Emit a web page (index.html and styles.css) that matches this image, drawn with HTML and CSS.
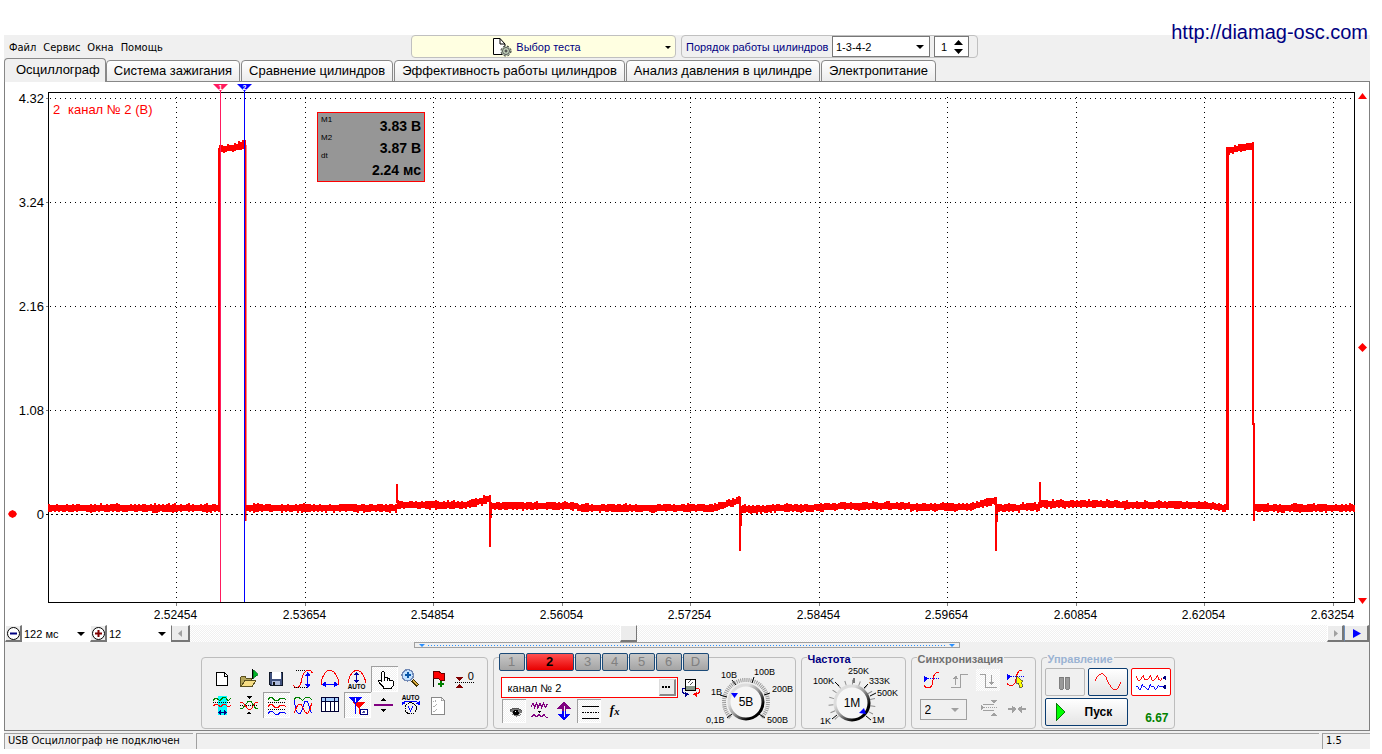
FILE: index.html
```html
<!DOCTYPE html>
<html lang="ru">
<head>
<meta charset="utf-8">
<title>Осциллограф</title>
<link rel="stylesheet" href="styles.css">
</head>
<body>
<div class="window">
  <header class="topbar">
    <nav class="menu">
      <a href="#">Файл</a><a href="#">Сервис</a><a href="#">Окна</a><a href="#">Помощь</a>
    </nav>
    <button class="test-picker" type="button">
      <svg width="20" height="20" viewBox="0 0 20 20"><path d="M1.500 1.500H8L13 7V17.500H1.500Z" fill="#fff" stroke="#000"/><path d="M8 1.500V7H13" fill="none" stroke="#000"/><circle cx="14" cy="14" r="5" fill="#c4d4bc" stroke="#222" stroke-dasharray="2 2"/><circle cx="14" cy="14" r="3.500" fill="#c4d4bc" stroke="#555"/><circle cx="14" cy="14" r="1" fill="#fff" stroke="#222"/></svg>
      <span>Выбор теста</span>
      <i class="caret"></i>
    </button>
    <div class="order-box">
      <label for="order">Порядок работы цилиндров</label>
      <span class="drop order"><select id="order"><option>1-3-4-2</option></select></span>
      <span class="spin"><input id="cyl" type="text" value="1" aria-label="Цилиндр"><svg width="9" height="14" viewBox="0 0 9 14"><path d="M0 5L4.500 0L9 5ZM0 9L4.500 14L9 9Z"/></svg></span>
    </div>
    <a class="site" href="#">http://diamag-osc.com</a>
  </header>

  <div class="tabs" role="tablist">
    <button class="tab active" role="tab" type="button">Осциллограф</button>
    <button class="tab" role="tab" type="button">Система зажигания</button>
    <button class="tab" role="tab" type="button">Сравнение цилиндров</button>
    <button class="tab" role="tab" type="button">Эффективность работы цилиндров</button>
    <button class="tab" role="tab" type="button">Анализ давления в цилиндре</button>
    <button class="tab" role="tab" type="button">Электропитание</button>
  </div>

  <main class="panel">
    <svg class="chart" viewBox="5 82 1364 543">
      <g id="grid"></g>
      <rect class="frame" x="48.500" y="92.500" width="1306" height="510"/>
      <path id="trace" class="trace"/>
      <path class="edges" d="M245.500 145V521M490 497V547M491 510V518M397 503V484M398 500V508M740 497V551M741 510V526M996 497V551M997 510V522M1040 504V482M1253 145V424H1254V521"/>
      <path class="edges rise" d="M219.500 510V148M1227.500 510V150"/>
      <path class="zero" d="M46 514.500H1354"/>
      <path d="M220.500 90V602" stroke="#ff1a5e"/><path d="M244.500 90V602" stroke="#00f"/>
      <path d="M213 84H228L220.500 91.500Z" fill="#ff1a5e"/><path d="M237 84H252L244.500 91.500Z" fill="#00f"/>
      <text class="mark" x="220.500" y="90">1</text><text class="mark" x="244.500" y="90">2</text>
      <text class="channel" x="53" y="114">2</text><text class="channel" x="68" y="114">канал № 2 (В)</text>
      <rect x="317.500" y="112.500" width="107" height="69" fill="#969696" stroke="#f00"/>
      <g class="tiny"><text x="321" y="122">M1</text><text x="321" y="140">M2</text><text x="321" y="158">dt</text></g>
      <g class="reading"><text x="421" y="131">3.83 В</text><text x="421" y="153">3.87 В</text><text x="421" y="175">2.24 мс</text></g>
      <g fill="#f00"><path d="M1358 99H1367L1362.500 93Z"/><path d="M1358 598H1367L1362.500 604Z"/><path d="M1358 347.500L1362.500 343L1367 347.500L1362.500 352Z"/><path d="M8 514L9.500 511.500L12.500 510L15.500 511.500L17 514L15.500 516.500L12.500 518L9.500 516.500Z"/></g>
    </svg>

    <div class="scrollrow">
      <button class="raised" type="button" aria-label="Уменьшить"><svg width="15" height="15" viewBox="0 0 15 15"><circle cx="7.500" cy="7.500" r="6" fill="#fff" stroke="#000"/><path d="M4 7.500H11" stroke="#000080" stroke-width="2"/></svg></button>
      <span class="drop flat span-time"><select aria-label="Развёртка"><option>122 мс</option></select></span>
      <button class="raised" type="button" aria-label="Увеличить"><svg width="15" height="15" viewBox="0 0 15 15"><circle cx="7.500" cy="7.500" r="6" fill="#fff" stroke="#000"/><path d="M4 7.500H11M7.500 4V11" stroke="#800000" stroke-width="2"/></svg></button>
      <span class="drop flat span-div"><select aria-label="Деление"><option>12</option></select></span>
      <button class="raised edge" type="button" aria-label="Влево"><svg width="9" height="9" viewBox="0 0 9 9"><path d="M2 4.500L6 1V8Z" fill="#a0a0a0"/></svg></button>
      <input class="scroll" type="range" min="0" max="1000" value="384" aria-label="Прокрутка">
      <button class="raised" type="button" aria-label="Вправо"><svg width="9" height="9" viewBox="0 0 9 9"><path d="M3 1V8L7 4.500Z" fill="#a0a0a0"/></svg></button>
      <button class="raised go" type="button" aria-label="В конец"><svg width="9" height="9" viewBox="0 0 9 9"><path d="M1 0V9L9 4.500Z" fill="#00f"/></svg></button>
    </div>

    <div class="splitter"><svg width="8" height="5" viewBox="0 0 8 5"><path d="M1 1H7L4 4Z"/></svg><i></i><svg width="8" height="5" viewBox="0 0 8 5"><path d="M1 1H7L4 4Z"/></svg></div>

    <div class="controls">
      <fieldset class="group tools">
        <button type="button" aria-label="Новый"><svg viewBox="42 48 81 78"><path d="M64.500 67.500H88L97.500 77V106.500H64.500Z" fill="#fff" stroke="#000"/><path d="M88 67V78H98" stroke="#000"/></svg></button>
        <button type="button" aria-label="Открыть"><svg viewBox="123 48 81 78"><path d="M136.500 109V83L140 80H150L154 85H168V109Z" fill="#b5a65a" stroke="#5a5020"/><path d="M139 109L150 91H183L172 109Z" fill="#f6dd84" stroke="#5a5020"/><path d="M173 58V88" stroke="#000"/><path d="M174 59L190 73L174 86Z" fill="#00b428" stroke="#006018" stroke-width="2"/></svg></button>
        <button type="button" aria-label="Сохранить"><svg viewBox="204 48 81 78"><path d="M223.500 67.500H263.500V106.500H228L223.500 102Z" fill="#41527e" stroke="#101828"/><path d="M231 67H257V86H231Z" fill="#fff"/><path d="M232 94H255V106H232Z" fill="#aebbdc"/><path d="M235 96H241V106H235Z" fill="#111"/></svg></button>
        <button type="button" aria-label="Амплитуда"><svg viewBox="285 48 81 78"><path d="M303 61.500H336" class="dot"/><path d="M295 105L300 111H311L317 102L322 80L327 68L335 61.500H346L353 70" stroke="#f00"/><path d="M297 112.500H336" class="dot"/><path d="M338 73V107" stroke="#00f"/><path d="M329 78L338 66L347 78ZM329 102L338 114L347 102Z" fill="#00f"/></svg></button>
        <button type="button" aria-label="Период"><svg viewBox="366 48 81 78"><path d="M378.500 104V92L385 77L393 65L400 61.500H409L418 67L426 80L431 92V104" stroke="#f00"/><path d="M386 103.500H424" stroke="#00f"/><path d="M381 103L393 94V113ZM429 103L417 94V113Z" fill="#00f"/></svg></button>
        <button type="button" aria-label="Автоматически"><svg viewBox="12 48 81 78"><path d="M25.500 100V90L31 76L40 65L46 61.500H55L64 67L72 81L76.500 92V100" stroke="#f00"/><path d="M50 69V93" stroke="#0000a0"/><path d="M42 75L50 65L58 75ZM42 90L50 99L58 90Z" fill="#0000a0"/><text x="23" y="116" font-size="19">AUTO</text></svg></button>
        <button class="on" type="button" aria-label="Рука"><svg viewBox="93 48 81 78"><path d="M125.500 92V67L128 64.500H131L133.500 68V84M133.500 92V82H141.500V92M142 86H149.500V94M150 90H155L160.500 94V106L154.500 113V116.500H132L130 111L116.500 96V90H121L125.500 95" fill="#fff" stroke="#000"/></svg></button>
        <button type="button" aria-label="Лупа"><svg viewBox="174 48 81 78"><path d="M217 90L234 107" stroke="#403000" stroke-width="10"/><path d="M219 92L233 106" stroke="#e0b040" stroke-width="5"/><circle cx="203" cy="76" r="17" fill="#c3e2ff" stroke="#7189b5" stroke-width="4"/><path d="M194 76H212M203 67V85" stroke="#0a56a8" stroke-width="6"/></svg></button>
        <button type="button" aria-label="Метка"><svg viewBox="255 48 81 78"><path d="M279.500 63V111" stroke="#000"/><path d="M281 65H297L303 69H312V90H301L295 86H281Z" fill="#f00" stroke="#600"/><path d="M294 103H312M303 94V112" stroke="#008000" stroke-width="6"/></svg></button>
        <button type="button" aria-label="Обнулить"><svg viewBox="336 48 81 78"><path d="M345 97.500H402" class="dot"/><path d="M347 80H370L358.500 93ZM347 115H370L358.500 102Z" fill="#800000"/><text class="plain" x="383" y="90" font-size="33">0</text></svg></button>

        <button type="button" aria-label="Интервал"><svg viewBox="42 126 81 78"><path d="M69 138H96V195H69Z" fill="#0ff"/><path d="M54 151L60 146H66L75 152L84 143H92L99 152L107 146" stroke="#008000"/><path d="M54 157.500H108" class="dot"/><path d="M54 168L60 164H68L77 171L85 163H92L99 171L108 166" stroke="#f00"/><path d="M71 187.500H94" stroke="#000080"/><path d="M69 187L77 181V194ZM96 187L88 181V194Z" fill="#000080"/></svg></button>
        <button type="button" aria-label="Сжатие"><svg viewBox="123 126 81 78"><path d="M155 139H171L163 147ZM155 193H171L163 184Z" fill="#000"/><path d="M135 166.500H190" class="dot"/><path d="M135 175H143L160 153H167L182 175H190" stroke="#008000"/><path d="M135 157H143L160 179H167L182 157H190" stroke="#f00"/></svg></button>
        <button class="on" type="button" aria-label="Раздельно"><svg viewBox="204 126 81 78"><path d="M219 148L225 143H232L241 152H249L257 144H265L273 150" stroke="#008000"/><path d="M219 156.500H274M219 177.500H274" class="dot"/><path d="M219 169L225 164H232L241 173H249L257 165H265L273 171" stroke="#f00"/><path d="M219 190L225 185H232L241 193H249L257 186H265L273 191" stroke="#00f"/></svg></button>
        <button type="button" aria-label="Совместно"><svg viewBox="285 126 81 78"><path d="M297 149L303 143H312L323 151L334 141H342L351 149" stroke="#008000"/><path d="M298 151L302 178L309 190H317L324 171L330 154H337L342 168L349 189" stroke="#00f"/><path d="M298 188L304 173L311 162H318L324 173L331 188L338 190L345 179L350 159" stroke="#f00"/></svg></button>
        <button type="button" aria-label="Таблица"><svg viewBox="366 126 81 78"><path d="M379.500 142.500H430.500V184.500H379.500Z" fill="#fff" stroke="#003"/><path d="M380 143H430V153H380Z" fill="#a8d0ff"/><path d="M379 154.500H431M392.500 142V185M405.500 154V185M418.500 142V185" stroke="#003"/></svg></button>
        <button class="on" type="button" aria-label="Маркеры"><svg viewBox="12 126 81 78"><path d="M38 156H76L57 176Z" fill="#f00"/><path d="M57 170V192" stroke="#f00"/><path d="M27 142H67L47 163Z" fill="#00f"/><path d="M47 160V192" stroke="#00f"/><path d="M47 145V157" stroke="#fff"/><path d="M61.500 177.500H82.500V193.500H61.500Z" fill="#fff" stroke="#000080"/><path d="M66 189L71 182V189L77 182" stroke="#000080" stroke-width="2"/></svg></button>
        <button type="button" aria-label="Уровень"><svg viewBox="93 126 81 78"><path d="M102 165H159" stroke="#800080" stroke-width="5"/><path d="M123 152H139L131 144ZM123 177H139L131 187Z" fill="#000"/></svg></button>
        <button type="button" aria-label="Автодиапазон"><svg viewBox="174 126 81 78"><text x="185" y="151" font-size="19">AUTO</text><path d="M188 160L195 155H229L236 160" stroke="#00f"/><path d="M185 154V166L196 161ZM239 154V166L228 161Z" fill="#00f"/><circle cx="212" cy="175" r="17" fill="#f0f0f0" stroke="#000" stroke-dasharray="5 2"/><path d="M205 169L211 183L218 169" stroke="#00f"/></svg></button>
        <button type="button" aria-label="Список"><svg viewBox="255 126 81 78"><path d="M274.500 142.500H304L314.500 152V192.500H274.500Z" fill="#fff" stroke="#888"/><path d="M304 142V152H314M279 154L283 157L290 149M279 168L283 171L290 163M279 182L283 185L290 177" stroke="#888" stroke-width="2"/></svg></button>
      </fieldset>

      <fieldset class="group channels">
        <div class="chan-row">
          <button class="chan" type="button">1</button><button class="chan current" type="button">2</button><button class="chan" type="button">3</button><button class="chan" type="button">4</button><button class="chan" type="button">5</button><button class="chan" type="button">6</button><button class="chan" type="button">D</button>
        </div>
        <div class="chan-body">
          <div class="chan-left">
            <div class="name-row">
              <span class="name-box"><input type="text" value="канал № 2" aria-label="Имя канала"><button class="more" type="button" aria-label="Ещё"><svg width="9" height="2" viewBox="0 0 9 2"><path d="M0 0H2V2H0ZM3 0H5V2H3ZM6 0H8V2H6Z"/></svg></button></span>
              <button class="probe" type="button" aria-label="Датчик"><svg viewBox="573 102 60 60"><path d="M586.500 106.500H616.500V140H586.500Z" fill="#fff" stroke="#000"/><path d="M588 127H616V139H588Z" fill="#8a9a8a"/><path d="M594 116L598 112M601 110H604M601 122L610 113" stroke="#000" stroke-width="2"/><path d="M584 133H578V145L586 151" stroke="#00008b"/><path d="M586 143L597 151L586 159Z" fill="#00008b"/><path d="M618 133H626L629 140V145L619 151" stroke="#f00"/><path d="M620 143L609 151L620 159Z" fill="#f00"/></svg></button>
            </div>
            <div class="chan-tools">
              <button class="on" type="button" aria-label="Показать"><svg viewBox="36 165 72 72"><path d="M60 203L67 196H88L96 203L91 214L78 218L66 212Z" fill="#777"/><path d="M59 200L69 193H84L97 201" stroke="#555"/><circle cx="78" cy="206" r="8" fill="#000"/><path d="M62 205L68 210M87 212L94 206" stroke="#eee"/><path d="M75 203H79" stroke="#fff"/></svg></button>
              <button type="button" aria-label="Фильтр"><svg viewBox="111 165 72 72"><path d="M123 188L129 178L134 191L140 177L144 192L150 179L155 190L161 178L166 190L173 179" stroke="#800080" stroke-width="4"/><path d="M140 200H155L148 208Z" fill="#000"/><path d="M124 220L132 212L139 219L147 212L154 219L162 212L168 219L173 221" stroke="#800080"/></svg></button>
              <button type="button" aria-label="Инверсия"><svg viewBox="186 165 72 72"><path d="M222 174L242 194H229V202H215V194H202Z" fill="#800080"/><path d="M222 229L242 210H229V201H215V210H202Z" fill="#00f"/><path d="M222 185V218" stroke="#f0f0f0"/></svg></button>
              <button class="on" type="button" aria-label="Линии"><svg viewBox="261 165 72 72"><path d="M276 186.500H327M276 222.500H327" stroke="#000"/><path d="M276 204.500H327" stroke="#000" stroke-dasharray="5 3"/></svg></button>
              <button type="button" aria-label="Функция"><svg viewBox="336 165 72 72"><text class="fx" x="359" y="211" font-size="38">f</text><text class="fx" x="373" y="213" font-size="32">x</text></svg></button>
            </div>
          </div>
          <svg class="knob" width="91" height="55" viewBox="705 672 91 55">
            <defs><linearGradient id="rim" x1="0.150" y1="0.150" x2="0.850" y2="0.850"><stop offset="0.200" stop-color="#ddd"/><stop offset="0.500" stop-color="#999"/><stop offset="0.900" stop-color="#000"/></linearGradient></defs>
            <path d="M731.500 718.500A22 22 0 1 1 762.500 718.500" fill="none" stroke="#999" stroke-width="4" stroke-dasharray="1 1"/>
            <g stroke="#000"><path d="M733 715L728 719M728 698L721 696M737 686L733 681M753 684L755 678M765 696L771 694M760 715L766 719"/></g>
            <circle cx="747" cy="703" r="17" fill="#f6f6f6" stroke="url(#rim)" stroke-width="3"/>
            <path d="M732 694H739L735.500 699Z" fill="#00f"/>
            <g class="scale"><text x="707" y="724">0,1В</text><text x="712" y="696">1В</text><text x="722" y="679">10В</text><text x="755" y="676">100В</text><text x="773" y="693">200В</text><text x="768" y="724">500В</text></g>
            <text class="value" x="747" y="707">5В</text>
          </svg>
        </div>
      </fieldset>

      <fieldset class="group freq"><legend>Частота</legend>
        <svg class="knob" width="101" height="62" viewBox="803 665 101 62">
          <path d="M837 718A21 21 0 1 1 867 718" fill="none" stroke="#8f8f8f" stroke-width="5" stroke-dasharray="1 6"/>
          <g stroke="#000"><path d="M837 715L832 719M839 686L835 682M854 683V678M864 688L868 684M870 696L876 693M866 716L871 720"/></g>
          <circle cx="852" cy="703" r="17" fill="#f6f6f6" stroke="url(#rim)" stroke-width="3"/>
          <path d="M859 713L864 708L866 714Z" fill="#00f"/>
          <g class="scale"><text x="820" y="724">1K</text><text x="813" y="684">100K</text><text x="848" y="674">250K</text><text x="869" y="684">333K</text><text x="877" y="696">500K</text><text x="872" y="723">1M</text></g>
          <text class="value" x="852" y="707">1M</text>
        </svg>
      </fieldset>

      <fieldset class="group sync"><legend>Синхронизация</legend>
        <div class="sync-row">
          <button type="button" aria-label="Синхронизация"><svg viewBox="45 75 72 66"><path d="M57 94V114L69 104Z" fill="#00f"/><path d="M69 103.500H105" stroke="#00f" stroke-dasharray="3 3"/><path d="M57 125L64 131H75L81 124L84 108L87 94L94 86H103" stroke="#f00"/></svg></button>
          <button type="button" aria-label="Фронт"><svg viewBox="132 75 72 66"><path d="M141 129.500H168.500V92.500H192M155 123V98" stroke="#a0a0a0"/><path d="M147 105L155 94L163 105Z" fill="#a0a0a0"/></svg></button>
          <button class="dither" type="button" aria-label="Спад"><svg viewBox="216 75 72 66"><path d="M228 92.500H245.500V130.500H279M262 93V116" stroke="#a0a0a0"/><path d="M254 114H270L262 124Z" fill="#a0a0a0"/></svg></button>
          <button type="button" aria-label="Указать уровень"><svg viewBox="300 75 72 66"><path d="M309 88V108L321 98Z" fill="#00f"/><path d="M321 97.500H360" stroke="#00f" stroke-dasharray="3 3"/><path d="M309 119L316 124H327L334 116L337 99L340 88L347 79H354" stroke="#f00"/><path d="M338 97V121L344 118L347 132L356 128L353 115L358 113L345 102Z" fill="#ff0" stroke="#333" stroke-width="2"/></svg></button>
        </div>
        <div class="sync-row low">
          <span class="drop src"><select aria-label="Источник" disabled><option>2</option></select></span>
          <svg class="ico" width="24" height="22" viewBox="219 162 72 66"><path d="M228 178V196L238 187ZM257 166H278L268 176ZM257 213H278L268 203Z" fill="#a0a0a0"/><path d="M234 178.500H268M234 196.500H268" stroke="#a0a0a0"/><path d="M238 187.500H278" stroke="#a0a0a0" stroke-dasharray="3 3"/></svg>
          <svg class="ico" width="24" height="22" viewBox="300 162 72 66"><path d="M321 181L335 193L321 206ZM351 181L337 193L351 206Z" fill="#a0a0a0"/><path d="M309 193H325M347 193H363" stroke="#a0a0a0" stroke-width="6"/></svg>
        </div>
      </fieldset>

      <fieldset class="group run"><legend>Управление</legend>
        <button class="btn" type="button" aria-label="Пауза" disabled><svg viewBox="420 69 120 84"><path d="M463 95H474V135H463ZM483 95H494V135H483Z" fill="#999" stroke="#777"/></svg></button>
        <button class="btn blue" type="button" aria-label="Одиночный"><svg viewBox="549 69 120 84"><path d="M567 108L573 95L580 87L588 84L596 88L603 97L610 112L618 126L625 134L632 137L640 132L646 123L651 112" stroke="#f00"/></svg></button>
        <button class="btn red" type="button" aria-label="Непрерывный"><svg viewBox="678 69 120 84"><path d="M691 90L695 104L702 106L708 98L713 89L717 103L724 106L731 98L736 88L740 104L747 106L754 98L759 89L763 103L769 106L774 97" stroke="#f00"/><path d="M688 127L695 124L700 134L705 134L709 119L714 127L720 126L725 135L731 134L735 119L740 127L746 125L751 135L757 133L762 121L768 127H776" stroke="#00f"/><path d="M774 98L786 90V105ZM774 127L786 119V135Z" fill="#000080"/></svg></button>
        <button class="btn blue start" type="button"><svg width="12" height="20" viewBox="0 0 12 20"><path d="M1 1L10 10L1 19Z" fill="#0f0" stroke="#087808"/></svg><span>Пуск</span></button>
        <output class="rate">6.67</output>
      </fieldset>
    </div>
  </main>

  <footer class="status"><span>USB Осциллограф не подключен</span><span></span><span>1.5</span></footer>
</div>
<script src="script.js"></script>
</body>
</html>
```

FILE: styles.css
```css
* { box-sizing: border-box; }
body { margin: 0; background: #fff; font: 11px/14px "Liberation Sans", Arial, sans-serif; color: #000; }
button, input, select { font: inherit; color: inherit; margin: 0; padding: 0; border: 0; background: none; border-radius: 0; appearance: none; outline: 0; }
svg { display: block; flex: none; }
.window { margin: 35px 12px 0 4px; background: #f0f0f0; }

.topbar { position: relative; display: flex; height: 24px; }
.menu { display: flex; gap: 7px; width: 407px; padding: 6px 0 0 5px; font-family: "DejaVu Sans Condensed", "Noto Sans", sans-serif; }
.menu a { color: #000; text-decoration: none; }
.site { position: absolute; right: 2px; top: -15px; font-size: 20px; line-height: 24px; color: #000080; text-decoration: none; }
.test-picker { position: relative; display: flex; align-items: center; justify-content: center; gap: 4px; width: 265px; height: 23px; padding-right: 14px; border: 1px solid #c0c0c0; border-radius: 4px; background: #ffffe1; color: #000080; }
.caret { position: absolute; right: 4px; top: 10px; border: 3px solid transparent; border-top-color: #000; border-bottom: 0; }
.order-box { display: flex; align-items: center; gap: 4px; width: 297px; height: 23px; margin-left: 5px; padding-left: 4px; border: 1px solid #c0c0c0; border-radius: 4px; color: #000080; }
.order-box label { width: 142px; white-space: nowrap; }
.drop { position: relative; display: block; background: #fff; color: #000; }
.drop select { width: 100%; height: 100%; padding: 0 3px; }
.drop::after { content: ""; position: absolute; right: 5px; top: 50%; margin-top: -2px; border: 4px solid transparent; border-top-color: #000; border-bottom: 0; pointer-events: none; }
.order { width: 98px; height: 21px; border: 1px solid #777; }
.spin { display: flex; align-items: center; width: 35px; height: 21px; border: 1px solid #777; background: #fff; color: #000; }
.spin input { width: 19px; padding-left: 6px; }

.tabs { position: relative; z-index: 1; display: flex; gap: 1px; align-items: flex-end; height: 23px; margin-bottom: -1px; font-size: 13px; line-height: 18px; }
.tab { height: 22px; padding: 1px 7px; border: 1px solid #888; border-radius: 4px 4px 0 0; background: linear-gradient(#fff, #ececec); white-space: nowrap; }
.tab.active { height: 24px; padding: 0 5px 2px 11px; border-bottom: 0; background: #f0f0f0; margin-right: -1px; }

.panel { border: 1px solid #808080; background: #f0f0f0; }
.chart { width: 100%; height: auto; background: #fff; font-family: "Liberation Sans", Arial, sans-serif; }
.frame { fill: none; stroke: #000; shape-rendering: crispEdges; }
.grid-line { stroke: #000; stroke-dasharray: 1 4; shape-rendering: crispEdges; }
.tick { stroke: #808080; shape-rendering: crispEdges; }
.axis.y { text-anchor: end; font-size: 13px; }
.axis.x { text-anchor: middle; font-size: 12px; }
.trace { stroke: #f00; fill: none; shape-rendering: crispEdges; }
.edges { stroke: #f00; stroke-width: 2; fill: none; }
.rise { stroke-width: 3; }
.zero { stroke: #000; stroke-dasharray: 2 3; shape-rendering: crispEdges; }
.mark { font-size: 7px; font-weight: 700; fill: #fff; text-anchor: middle; }
.channel { font-size: 13px; fill: #f00; }
.tiny { font-size: 8px; }
.reading { font-size: 14px; font-weight: 700; text-anchor: end; }

.scrollrow { display: flex; height: 17px; background: #fff; }
.raised { display: flex; flex: none; align-items: center; justify-content: center; width: 17px; height: 17px; border: 1px solid #fff; border-right: 2px solid #777; border-bottom: 2px solid #777; background: #ececec; }
.raised.edge { width: 19px; border-left: 1px solid #777; }
.raised.go { width: 25px; border-left-color: #6a8fc0; }
.span-time { width: 68px; }
.span-div { width: 64px; }
.flat select { padding: 0 2px; }
.scroll { flex: 1; min-width: 0; height: 17px; background: repeating-conic-gradient(#fff 0 25%, #f0f0f0 0 50%) 0 0 / 2px 2px; }
.scroll::-webkit-slider-thumb { appearance: none; width: 17px; height: 17px; border: 1px solid #fff; border-right: 1px solid #777; border-bottom: 2px solid #777; background: #ececec; }
.splitter { display: flex; align-items: center; gap: 2px; width: 40%; height: 6px; margin: 0 auto; padding: 0 3px; border: 1px solid #a0a0a0; }
.splitter svg { fill: #2a90ff; }
.splitter i { flex: 1; height: 1px; background: repeating-linear-gradient(90deg, #2a90ff 0 1px, transparent 1px 3px); }

.controls { display: flex; justify-content: center; gap: 5px; padding: 9px 0 1px 1px; }
.group { position: relative; flex: none; min-width: 0; height: 72px; margin: 0; padding: 0; border: 1px solid #bdbdbd; border-radius: 4px; }
.group legend { position: absolute; left: 5px; top: -6px; padding: 0 1px; background: #f0f0f0; font-weight: 700; font-size: 11px; line-height: 14px; }
.group button svg, .ico { fill: none; stroke-width: 3; shape-rendering: crispEdges; }
.group button text { fill: #000; font-weight: 700; shape-rendering: auto; }
.group button .plain { font-weight: 400; }
.dot { stroke: #000; stroke-dasharray: 3 3; }
.tools { display: grid; grid-template-columns: repeat(10, 27px); grid-auto-rows: 26px; width: 287px; padding: 8px 7px; }
.tools svg { width: 27px; height: 26px; }
.on { background: repeating-conic-gradient(#fff 0 25%, #f0f0f0 0 50%) 0 0 / 2px 2px; box-shadow: inset 1px 1px #a0a0a0, inset -1px -1px #fff; }

.channels { width: 303px; padding: 0 0 0 5px; }
.chan-row { display: flex; gap: 1px; margin-top: -5px; }
.chan { width: 26px; height: 18px; border: 1px solid #1b4a78; border-radius: 2px; background: linear-gradient(#c8c8c8, #a4a4a4); color: #808080; font-size: 13px; line-height: 16px; }
.chan.current { width: 48px; background: linear-gradient(#ff5050, #e80000); color: #000; font-weight: 700; }
.chan-body { display: flex; }
.chan-left { width: 206px; padding: 6px 0 0 2px; }
.name-row { display: flex; gap: 3px; }
.name-box { display: flex; width: 177px; height: 21px; padding: 1px; border: 1px solid #f00; background: #fff; }
.name-box input { flex: 1; min-width: 0; padding-left: 5px; }
.more { display: flex; align-items: center; justify-content: center; width: 17px; border: 1px solid #ddd; border-right: 2px solid #888; border-bottom: 2px solid #888; background: #ececec; }
.group .more svg { fill: #000; }
.probe svg { width: 20px; height: 20px; }
.chan-tools { display: flex; gap: 1px; margin: 1px 0 0 1px; }
.chan-tools svg { width: 24px; height: 24px; }
.group .fx { font-family: "Liberation Serif", serif; font-style: italic; }
.knob { overflow: visible; margin-left: 1px; }
.scale { font-size: 9px; }
.value { font-size: 12px; text-anchor: middle; }

.freq { width: 105px; padding-top: 7px; }
.group.freq legend { color: #000080; }
.sync { width: 125px; padding: 11px 0 0 8px; }
.group.sync legend { color: #707070; }
.sync-row { display: flex; gap: 4px; }
.sync-row button svg { width: 24px; height: 22px; }
.dither { background: repeating-conic-gradient(#fff 0 25%, #f0f0f0 0 50%) 0 0 / 2px 2px; }
.sync-row.low { padding-top: 8px; gap: 3px; }
.src { width: 47px; height: 21px; margin-right: 8px; border: 1px solid #a0a0a0; background: #f0f0f0; font-size: 12px; }
.src select { padding-left: 4px; color: #000; opacity: 1; }
.src::after { border-top-color: #a0a0a0; right: 7px; }
.run { display: grid; grid-template-columns: 40px 40px 40px; gap: 2px 3px; align-content: start; width: 134px; padding: 10px 0 0 3px; }
.group.run legend { color: #9bb3d3; }
.btn { height: 28px; border: 1px solid #b8b8b8; border-radius: 2px; background: #f0f0f0; }
.btn svg { width: 38px; height: 26px; }
.btn.blue { border-color: #0a3c70; background: linear-gradient(#fff, #e4e4e4); }
.btn.red { border-color: #f00; background: #fff; }
.start { grid-column: span 2; display: flex; align-items: center; padding-left: 9px; gap: 18px; font-size: 12px; font-weight: 700; }
.btn.start svg { width: 12px; height: 20px; stroke-width: 1; }
.rate { align-self: end; justify-self: end; padding-right: 2px; font-size: 12px; line-height: 16px; font-weight: 700; color: #008000; }

.status { display: flex; gap: 3px; padding-top: 2px; font-family: "DejaVu Sans Condensed", "Noto Sans", sans-serif; }
.status span { height: 16px; padding: 0 3px; border-top: 1px solid #a0a0a0; border-left: 1px solid #a0a0a0; white-space: nowrap; }
.status span:first-child { width: 189px; }
.status span:nth-child(2) { flex: 1; }
.status span:last-child { width: 48px; }
```

FILE: script.js
```js
const ns = "http://www.w3.org/2000/svg";
const grid = document.getElementById("grid");

function add(tag, attrs, text) {
  const el = document.createElementNS(ns, tag);
  for (const key in attrs) el.setAttribute(key, attrs[key]);
  if (text) el.textContent = text;
  grid.appendChild(el);
}

const times = ["2.52454", "2.53654", "2.54854", "2.56054", "2.57254", "2.58454", "2.59654", "2.60854", "2.62054", "2.63254"];
times.forEach((label, i) => {
  const x = Math.round(176 + i * 128.5) + 0.5;
  add("path", { class: "grid-line", d: `M${x} 97V602` });
  add("path", { class: "tick", d: `M${x} 603V606` });
  add("text", { class: "axis x", x: x - 1, y: 619 }, label);
});

["4.32", "3.24", "2.16", "1.08", "0"].forEach((label, i) => {
  const y = 98.5 + i * 104;
  if (i < 4) add("path", { class: "grid-line", d: `M50 ${y}H1354` });
  add("path", { class: "tick", d: `M46 ${y}H48` });
  add("text", { class: "axis y", x: 44, y: y + 4 }, label);
});

// Centre line of the signal: [x, y] knots, joined linearly.
const knots = [
  [48, 508], [219, 508], [219, 149], [232, 148], [245, 144], [245, 508], [397, 508], [397, 505], [465, 505],
  [490, 498], [490, 506], [576, 506], [577, 508], [712, 508], [740, 500], [740, 509], [800, 508], [850, 506], [970, 507],
  [996, 500], [996, 508], [1040, 507], [1040, 504], [1200, 505], [1226, 508], [1226, 151], [1240, 148], [1253, 145],
  [1253, 508], [1354, 508]
];

let seed = 7;
const random = () => (seed = (seed * 16807) % 2147483647) / 2147483647;
const jitter = () => (random() < 0.5 ? 1 : 0) + (random() < 0.15 ? 1 : 0);

let d = "";
for (let k = 0; k < knots.length - 1; k++) {
  const [x0, y0] = knots[k];
  const [x1, y1] = knots[k + 1];
  for (let x = x0; x < x1; x += 2) {
    const y = y0 + ((y1 - y0) * (x - x0)) / (x1 - x0);
    const top = Math.round(y - 3 - jitter());
    const bottom = Math.round(y + 3 + jitter());
    d += `M${x + 0.5} ${top}V${bottom}M${x + 1.5} ${top}V${bottom}`;
  }
}
document.getElementById("trace").setAttribute("d", d);
```
